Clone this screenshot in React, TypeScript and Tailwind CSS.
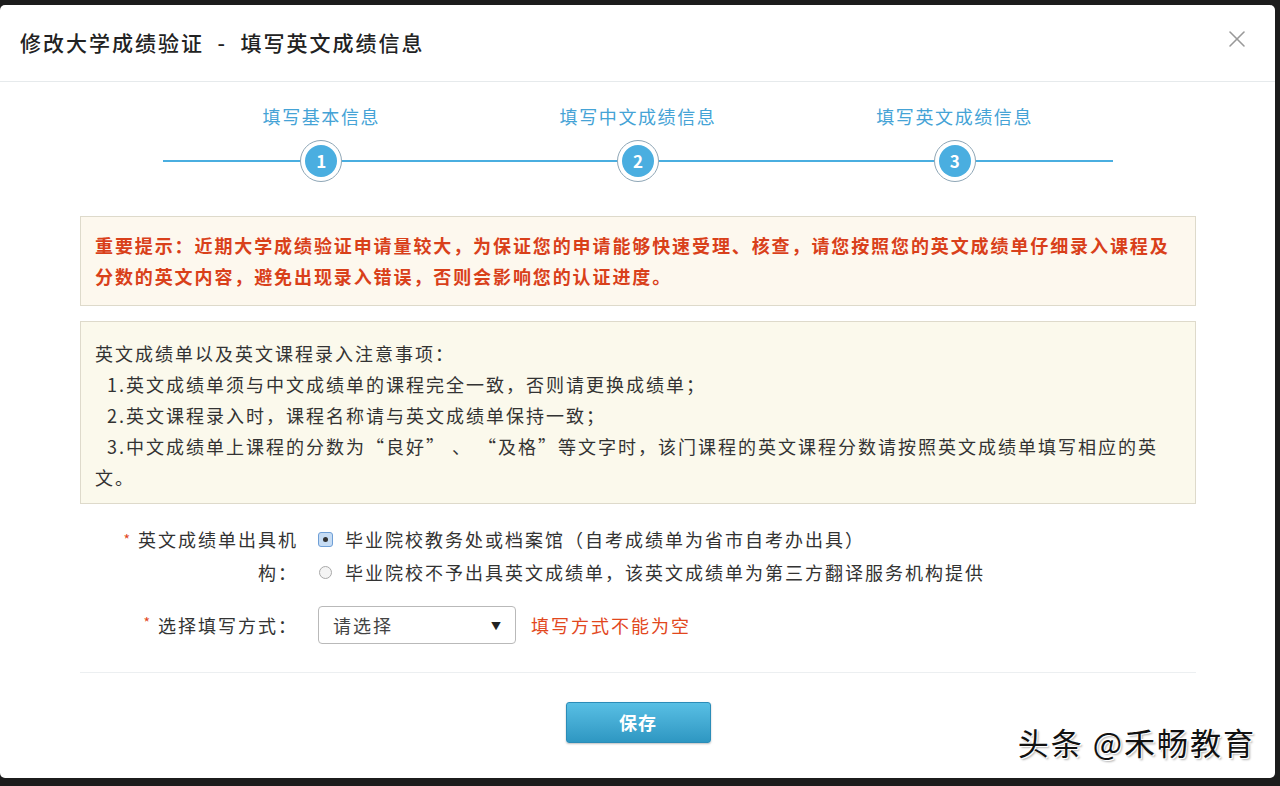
import { X } from 'lucide-react';

const steps = ['填写基本信息', '填写中文成绩信息', '填写英文成绩信息'];

function Step({ label, n }: { label: string; n: number }) {
  return (
    <div className="flex flex-1 flex-col items-center">
      <div className="text-[18px] leading-[24px] tracking-[1.6px] text-[#45a3d6]">{label}</div>
      <div className="mt-[12px] flex h-[42px] w-full items-center">
        <div className="h-[2px] flex-1 bg-[#4aaee0]" />
        <div className="flex h-[42px] w-[42px] items-center justify-center rounded-full border border-[#8ea6b6] bg-white">
          <div className="flex h-[32px] w-[32px] items-center justify-center rounded-full bg-[#4aaee0] text-[17px] font-bold text-white">
            {n}
          </div>
        </div>
        <div className="h-[2px] flex-1 bg-[#4aaee0]" />
      </div>
    </div>
  );
}

export default function App() {
  return (
    <div className="h-[786px] w-[1280px] overflow-hidden bg-[#1c1c1c] pt-[5px] pr-[5px] pb-[8px] font-['Noto_Sans_CJK_SC',sans-serif]">
      <div className="relative h-full w-full rounded-[5px] bg-white">
        {/* header */}
        <div className="flex h-[77px] items-center justify-between border-b border-[#e6eaec] pl-[20px] pr-[24px]">
          <h1 className="text-[21px] font-medium tracking-[2px] text-[#222]">修改大学成绩验证 &nbsp;-&nbsp; 填写英文成绩信息</h1>
          <X size={28} strokeWidth={1.3} className="-mt-[8px] text-[#999]" />
        </div>

        <div className="pl-[80px] pr-[79px]">
          {/* stepper */}
          <div className="mx-[83px] flex pt-[22px]">
            {steps.map((s, i) => (
              <Step key={s} label={s} n={i + 1} />
            ))}
          </div>

          {/* warning */}
          <div className="mt-[34px] border border-[#dedacb] bg-[#fdf8ee] px-[14px] py-[13px] text-[18px] font-bold leading-[31px] tracking-[1.9px] text-[#d9401a]">
            重要提示：近期大学成绩验证申请量较大，为保证您的申请能够快速受理、核查，请您按照您的英文成绩单仔细录入课程及
            <br />
            分数的英文内容，避免出现录入错误，否则会影响您的认证进度。
          </div>

          {/* notes */}
          <div className="mt-[15px] border border-[#dedacb] bg-[#fbf9ec] px-[14px] pt-[16px] pb-[10px] text-[18px] leading-[31px] tracking-[2px] text-[#333]">
            <div>英文成绩单以及英文课程录入注意事项：</div>
            <div className="pl-[12px]">1.英文成绩单须与中文成绩单的课程完全一致，否则请更换成绩单；</div>
            <div className="pl-[12px]">2.英文课程录入时，课程名称请与英文成绩单保持一致；</div>
            <div className="indent-[12px]">
              3.中文成绩单上课程的分数为“良好” 、 “及格”等文字时，该门课程的英文课程分数请按照英文成绩单填写相应的英
              <br />
              文。
            </div>
          </div>

          {/* form */}
          <div className="mt-[19px] flex text-[18px] leading-[33px] tracking-[2px] text-[#333]">
            <div className="w-[218px] text-right">
              <span className="mr-[6px] align-top text-[14px] text-[#e2471d]">*</span>英文成绩单出具机
              <br />
              构：
            </div>
            <div className="ml-[20px] flex flex-col">
              <label className="flex items-center gap-[12px]">
                <span className="flex h-[15px] w-[15px] items-center justify-center rounded-[3px] border border-[#6f9fd6] bg-[#c6dcf4]">
                  <span className="h-[5px] w-[5px] rounded-full bg-[#333]" />
                </span>
                毕业院校教务处或档案馆（自考成绩单为省市自考办出具）
              </label>
              <label className="flex items-center gap-[12px]">
                <span className="ml-[1px] h-[13px] w-[13px] rounded-full border border-[#a9a9a9] bg-[#f4f4f4]" />
                <span className="ml-[1px]">毕业院校不予出具英文成绩单，该英文成绩单为第三方翻译服务机构提供</span>
              </label>
            </div>
          </div>

          <div className="mt-[17px] flex items-center text-[18px] tracking-[2px] text-[#333]">
            <div className="w-[218px] text-right">
              <span className="mr-[6px] align-top text-[14px] text-[#e2471d]">*</span>选择填写方式：
            </div>
            <div className="ml-[20px] flex h-[38px] w-[198px] items-center justify-between rounded-[4px] border border-[#b9b9b9] bg-white pl-[14px] pr-[12px] text-[#444]">
              <span>请选择</span>
              <span className="text-[10px] text-[#222]">▼</span>
            </div>
            <div className="ml-[15px] text-[#e2471d]">填写方式不能为空</div>
          </div>

          <div className="mt-[28px] h-px bg-[#eceff1]" />

          <div className="mt-[29px] flex justify-center">
            <button className="h-[41px] w-[145px] rounded-[3px] border border-[#2b8cb8] bg-gradient-to-b from-[#58bfe4] to-[#2e97c2] text-[18px] font-bold tracking-[1px] text-white shadow-[0_1px_2px_rgba(0,0,0,0.25)]">
              保存
            </button>
          </div>
        </div>

        {/* watermark */}
        <div className="absolute right-[19px] bottom-[13px] text-[31px] tracking-[2px] text-[#111] [text-shadow:1px_1px_0_#fff,-1px_-1px_0_#fff,2px_2px_2px_rgba(0,0,0,0.3)]">
          头条 @禾畅教育
        </div>
      </div>
    </div>
  );
}
